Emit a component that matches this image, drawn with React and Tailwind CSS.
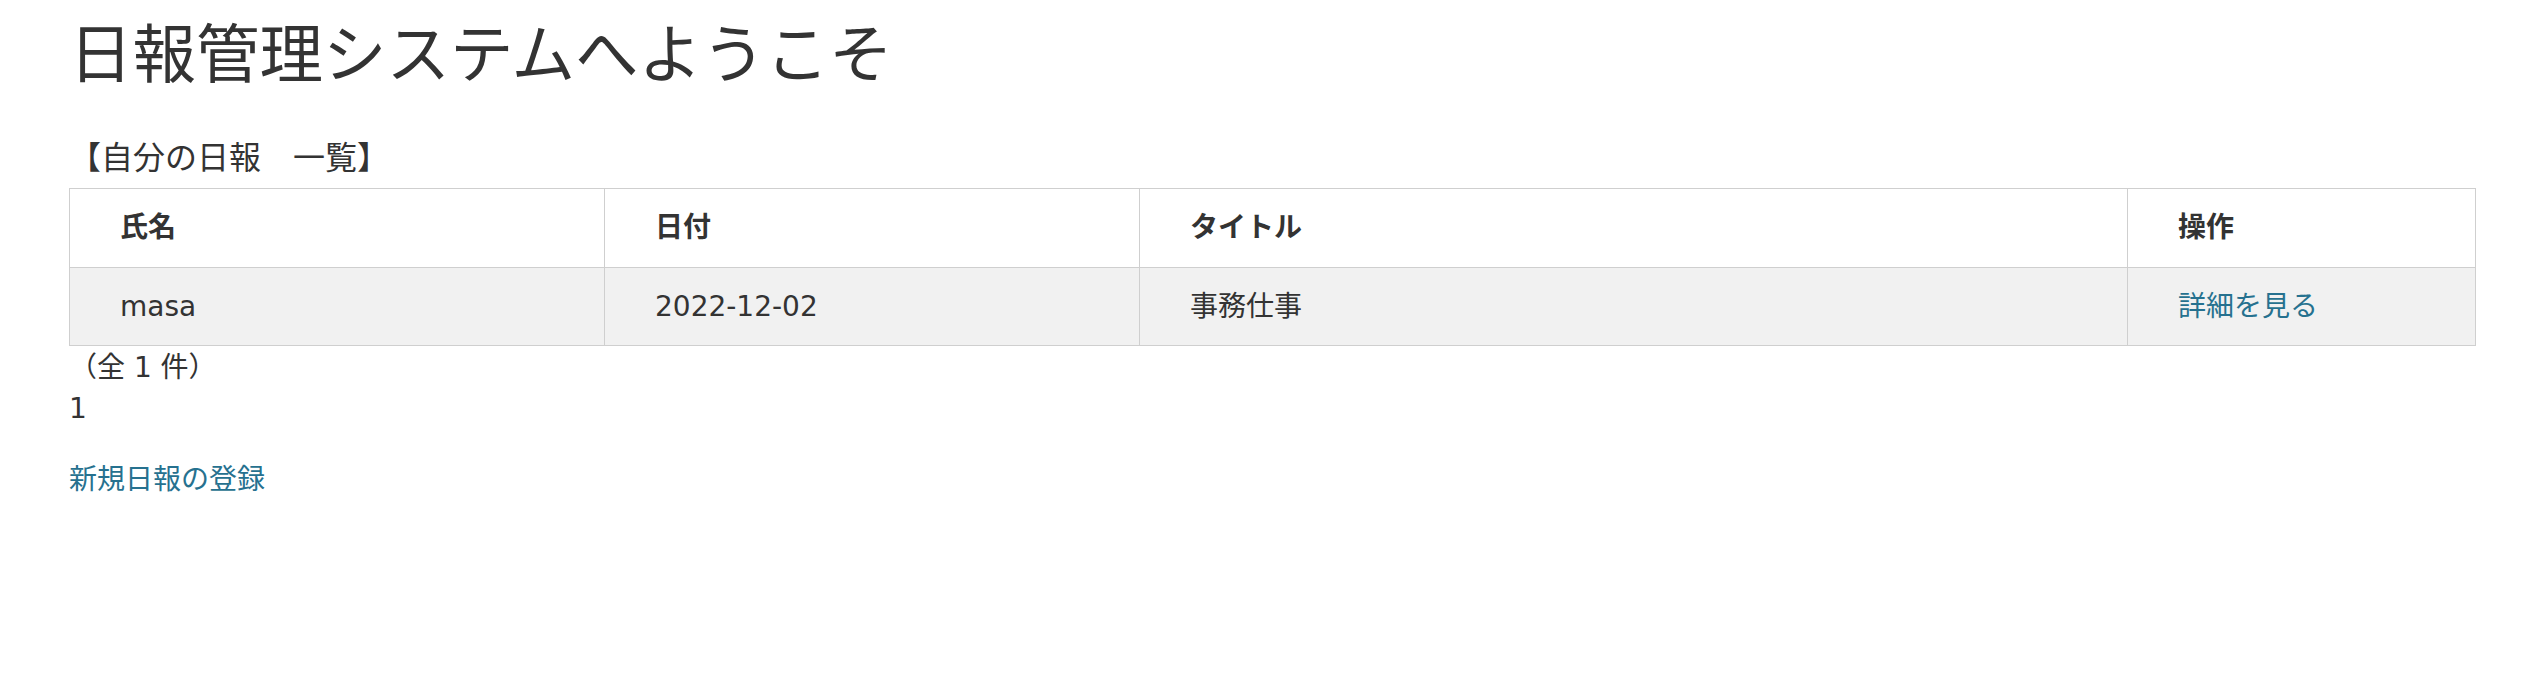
export default function App() {
  // Latin glyphs in the shot are wide (Meiryo-like), so DejaVu Sans takes Latin and Noto CJK the rest
  const font = { fontFamily: '"DejaVu Sans", "Noto Sans CJK JP", sans-serif' };

  return (
    <div className="min-h-[681px] bg-white text-[#333333] pl-[69px]" style={font}>
      <h1 className="pt-[21px] text-[63.5px] leading-[69px] font-normal">
        日報管理システムへようこそ
      </h1>

      <h3 className="mt-[48px] text-[32px] leading-[40px] font-normal">
        【自分の日報　一覧】
      </h3>

      <table className="mt-[10px] w-[2407px] border-collapse border border-[#cfcfcf] text-[28px]">
        <thead>
          <tr className="h-[79px] bg-white">
            <th className="w-[535px] border border-[#cfcfcf] pl-[50px] text-left font-bold">氏名</th>
            <th className="w-[535px] border border-[#cfcfcf] pl-[50px] text-left font-bold">日付</th>
            <th className="w-[988px] border border-[#cfcfcf] pl-[50px] text-left font-bold">タイトル</th>
            <th className="border border-[#cfcfcf] pl-[50px] text-left font-bold">操作</th>
          </tr>
        </thead>
        <tbody>
          <tr className="h-[78px] bg-[#f1f1f1]">
            <td className="border border-[#cfcfcf] pl-[50px]">masa</td>
            <td className="border border-[#cfcfcf] pl-[50px]">2022-12-02</td>
            <td className="border border-[#cfcfcf] pl-[50px]">事務仕事</td>
            <td className="border border-[#cfcfcf] pl-[50px]">
              <a href="#" className="text-[#26718f]">詳細を見る</a>
            </td>
          </tr>
        </tbody>
      </table>

      <div className="mt-[1px] text-[28px] leading-[41px]">
        <p>（全 1 件）</p>
        <p>1</p>
        <p className="mt-[30px]">
          <a href="#" className="text-[#26718f]">新規日報の登録</a>
        </p>
      </div>
    </div>
  );
}
